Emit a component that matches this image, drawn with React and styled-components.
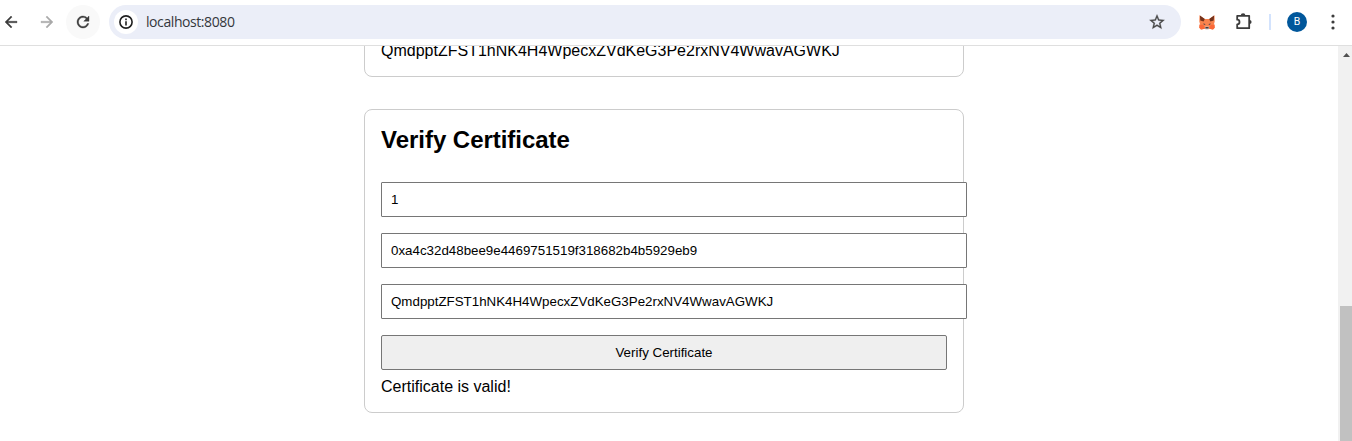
import React from "react";
import styled, { createGlobalStyle } from "styled-components";
import { MdArrowBack, MdArrowForward, MdRefresh, MdStarBorder } from "react-icons/md";

const GlobalStyle = createGlobalStyle`
  * { box-sizing: border-box; }
  body {
    margin: 0;
    background: #fff;
    color: #000;
    font-family: "Liberation Sans", Arial, sans-serif;
    font-size: 16px;
    overflow: hidden;
  }
`;

const Browser = styled.div`
  display: flex;
  flex-direction: column;
  height: 441px;
  overflow: hidden;
`;

const Toolbar = styled.header`
  display: flex;
  align-items: center;
  flex: none;
  height: 46px;
  padding-bottom: 1px;
  border-bottom: 1px solid #dfdfdf;
  color: #474747;
`;

const NavButton = styled.span`
  display: flex;
  align-items: center;
  justify-content: center;
  width: ${(p) => p.$width || 34}px;
  height: 34px;
  border-radius: 17px;
  flex: none;
  color: ${(p) => p.$color || "#3c3c3c"};
  background: ${(p) => p.$background || "transparent"};
  margin-right: ${(p) => p.$gap || 0}px;

  path:last-child {
    stroke: currentColor;
    stroke-width: 0.5px;
  }
`;

const AddressBar = styled.div`
  display: flex;
  align-items: center;
  flex: none;
  width: 1072px;
  height: 34px;
  padding: 0 15px 0 5px;
  border-radius: 17px;
  background: #ebeef8;

  > svg path:last-child {
    stroke: currentColor;
    stroke-width: 0.4px;
  }
`;

const SiteInfo = styled.span`
  display: flex;
  align-items: center;
  justify-content: center;
  width: 24px;
  height: 24px;
  border-radius: 50%;
  background: #fff;
  color: #1f1f1f;
`;

const Url = styled.span`
  flex: 1;
  margin-left: 8px;
  color: #34373c;
  font: 14px/20px "Open Sans", "Noto Sans", sans-serif;
  letter-spacing: -0.42px;
`;

const Actions = styled.div`
  display: flex;
  align-items: center;
  flex: none;
  padding-left: 17px;
`;

const ActionIcon = styled.span`
  display: flex;
  align-items: center;
  justify-content: center;
  width: ${(p) => p.$width}px;
  height: 34px;
  margin-right: ${(p) => p.$gap || 0}px;
  color: #3c3c3c;
`;

const Divider = styled.span`
  width: 2px;
  height: 16px;
  margin: 0 16px;
  background: #d3e3fd;
`;

const Avatar = styled.span`
  width: 20px;
  height: 20px;
  margin-right: 7px;
  border-radius: 50%;
  background: #01579b;
  color: #fff;
  text-align: center;
  font: 10.5px/20px Roboto, sans-serif;
`;

const Viewport = styled.div`
  display: flex;
  flex: 1;
  min-height: 0;
`;

const Page = styled.main`
  flex: 1;
  min-width: 0;
  overflow: hidden;
  padding-left: 364px;
`;

const Card = styled.section`
  width: 600px;
  margin-bottom: 32px;
  padding: 16px;
  border: 1px solid #ccc;
  border-radius: 8px;
`;

const ScrolledCard = styled(Card)`
  margin-top: -21px;
`;

const Text = styled.p`
  margin: 0;
  line-height: 18px;
`;

const Result = styled(Text)`
  margin-top: 8px;
`;

const Title = styled.h2`
  margin: 0 0 28px;
  font-size: 24px;
  line-height: 28px;
  letter-spacing: -0.03px;
`;

const Field = styled.input`
  display: block;
  width: calc(100% + 20px);
  height: 35px;
  margin: 0 0 16px;
  padding: 0 9px;
  border: 1px solid #767676;
  border-radius: 1px;
  outline: none;
  background: #fff;
  color: #000;
  font: 13.333px "Liberation Sans", Arial, sans-serif;
`;

const SubmitButton = styled.button`
  display: block;
  width: 100%;
  height: 35px;
  padding: 0;
  border: 1px solid #767676;
  border-radius: 2px;
  background: #efefef;
  color: #000;
  font: 13.333px "Liberation Sans", Arial, sans-serif;
`;

const ScrollTrack = styled.div`
  display: flex;
  flex-direction: column;
  justify-content: space-between;
  width: 14px;
  padding-left: 2px;
  background: #f1f1f1;
`;

const ScrollArrow = styled.svg`
  width: 7px;
  height: 4px;
  margin: 7px 0 0 3px;
`;

const ScrollThumb = styled.div`
  height: 135px;
  background: #c1c1c1;
`;

const Info = () => (
  <svg width="14" height="14" viewBox="0 0 14 14">
    <circle cx="7" cy="7" r="6.1" fill="none" stroke="currentColor" strokeWidth="1.6" />
    <path d="M6.2 6.2h1.6v4.2H6.2ZM6.2 3.6h1.6v1.6H6.2Z" fill="currentColor" />
  </svg>
);

const Fox = () => (
  <svg width="16" height="15" viewBox="0 0 16 15">
    <path d="M.5.3 5.8 4h4.4L15.5.3l.2 6.2-.9 3.2.9 3-1.7 1.8-3.6-.8H5.6l-3.6.8-1.7-1.8.9-3-.9-3.2Z" fill="#f9834d" />
    <path d="M.9.5 5.8 4 4.6 6.6 1.3 5.5ZM15.1.5 10.2 4l1.2 2.6 3.3-1.1Z" fill="#71321c" />
    <path d="M.3 9.6 4.3 10 6 13.7l-4 .8-1.7-1.8ZM15.7 9.6l-4 .4-1.7 3.7 4 .8 1.7-1.8Z" fill="#fa6837" />
    <path d="m4.3 8.2 2.4 1.1-1.7.7ZM11.7 8.2 9.3 9.3l1.7.7Z" fill="#54424a" />
    <path d="M6.2 11.5h3.6l.4 2.2-.9.9H6.7l-.9-.9Z" fill="#d9c4ba" />
    <path d="M6.5 12.1h3l.2 1.4H6.3Z" fill="#443b40" />
  </svg>
);

const Puzzle = () => (
  <svg width="20" height="20" viewBox="0 0 20 20">
    <path
      d="M4.2 3.8h12v12.4h-12v-3.9a2.3 2.3 0 0 0 0-4.6Z"
      fill="none"
      stroke="currentColor"
      strokeWidth="1.8"
      strokeLinejoin="round"
    />
    <path d="M7.8 3.6a2.3 2.3 0 0 1 4.6 0ZM16.5 7.9a2.1 2.1 0 0 1 0 4.2Z" fill="currentColor" />
  </svg>
);

const Dots = () => (
  <svg width="4" height="16" viewBox="0 0 4 16">
    <g fill="currentColor">
      <circle cx="2" cy="2" r="1.6" />
      <circle cx="2" cy="8" r="1.6" />
      <circle cx="2" cy="14" r="1.6" />
    </g>
  </svg>
);

const fields = [
  "1",
  "0xa4c32d48bee9e4469751519f318682b4b5929eb9",
  "QmdpptZFST1hNK4H4WpecxZVdKeG3Pe2rxNV4WwavAGWKJ",
];

export default function App() {
  return (
    <Browser>
      <GlobalStyle />
      <Toolbar>
        <NavButton $width={22} $gap={8}><MdArrowBack size={18} /></NavButton>
        <NavButton $color="#a9a9a9" $gap={2}><MdArrowForward size={18} /></NavButton>
        <NavButton $background="#f9f9f9" $gap={9}><MdRefresh size={18} /></NavButton>
        <AddressBar>
          <SiteInfo><Info /></SiteInfo>
          <Url>localhost:8080</Url>
          <MdStarBorder size={18} />
        </AddressBar>
        <Actions>
          <ActionIcon $width={18} $gap={17}><Fox /></ActionIcon>
          <ActionIcon $width={20}><Puzzle /></ActionIcon>
          <Divider />
          <Avatar>B</Avatar>
          <ActionIcon $width={38}><Dots /></ActionIcon>
        </Actions>
      </Toolbar>
      <Viewport>
        <Page>
          <ScrolledCard>
            <Text>QmdpptZFST1hNK4H4WpecxZVdKeG3Pe2rxNV4WwavAGWKJ</Text>
          </ScrolledCard>
          <Card>
            <Title>Verify Certificate</Title>
            {fields.map((value) => <Field key={value} defaultValue={value} />)}
            <SubmitButton>Verify Certificate</SubmitButton>
            <Result>Certificate is valid!</Result>
          </Card>
        </Page>
        <ScrollTrack>
          <ScrollArrow viewBox="0 0 7 4"><path d="M0 4 3.5 0 7 4Z" fill="#505050" /></ScrollArrow>
          <ScrollThumb />
        </ScrollTrack>
      </Viewport>
    </Browser>
  );
}
